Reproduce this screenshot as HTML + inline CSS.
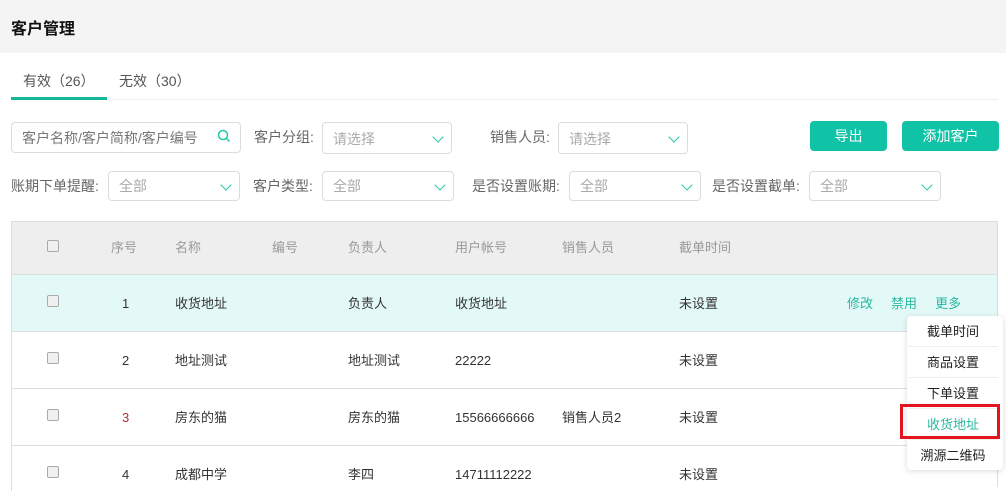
<!DOCTYPE html>
<html><head><meta charset="utf-8"><style>
*{box-sizing:border-box;margin:0;padding:0}
body{width:1006px;height:487px;overflow:hidden;background:#fff;font-family:"Liberation Sans","Noto Sans CJK SC",sans-serif;font-size:13px;color:#333;position:relative}
.a{position:absolute;white-space:nowrap;line-height:16px}
.hdr{left:0;top:0;width:1006px;height:53px;background:#f4f4f4}
.box{position:absolute;border:1px solid #dcdcdc;border-radius:4px;background:#fff;height:31px;color:#aaa;font-size:14px;padding:0 10px;line-height:30px}
.chev{position:absolute;right:9px;top:9px;width:8px;height:8px;border-right:1.6px solid #20c9a5;border-bottom:1.6px solid #20c9a5;transform:rotate(45deg)}
.lbl{font-size:14px;color:#666}
.btn{position:absolute;background:#11c3a6;color:#fff;border-radius:4px;height:30px;line-height:30px;text-align:center;font-size:14px}
.row{position:absolute;left:11px;width:987px;border-bottom:1px solid #ddd}
.cb{position:absolute;left:47px;width:12px;height:12px;border:1px solid #aaa;border-radius:2px;background:#f0f0f0}
.th{color:#999;font-size:13px}
.mi{position:absolute;left:908px;width:90px;height:31px;line-height:31px;text-align:center;color:#222;border-bottom:1px solid #eee}
</style></head><body>
<div class="a hdr"></div>
<div class="a" style="left:11px;top:22px;font-size:16px;font-weight:bold;color:#111">客户管理</div>
<div class="a" style="left:23px;top:73px;font-size:14px;color:#555">有效（26）</div>
<div class="a" style="left:119px;top:73px;font-size:14px;color:#555">无效（30）</div>
<div class="a" style="left:11px;top:99px;width:987px;height:1px;background:#eee"></div>
<div class="a" style="left:11px;top:97px;width:96px;height:3px;background:#14b896"></div>

<div class="box" style="left:11px;top:122px;width:230px;color:#777">客户名称/客户简称/客户编号</div>
<svg class="a" style="left:217px;top:129px" width="14" height="14" viewBox="0 0 14 14"><circle cx="6" cy="6" r="4.5" fill="none" stroke="#20c9a5" stroke-width="1.5"/><path d="M9.5 9.5L12.5 12.5" stroke="#20c9a5" stroke-width="1.5"/></svg>
<div class="a lbl" style="left:254px;top:129px">客户分组:</div>
<div class="box" style="left:322px;top:122px;width:130px;height:32px;line-height:32px">请选择<span class="chev" style="top:10px"></span></div>
<div class="a lbl" style="left:490px;top:129px">销售人员:</div>
<div class="box" style="left:558px;top:122px;width:130px;height:32px;line-height:32px">请选择<span class="chev" style="top:10px"></span></div>
<div class="btn" style="left:810px;top:121px;width:77px">导出</div>
<div class="btn" style="left:902px;top:121px;width:97px">添加客户</div>

<div class="a lbl" style="left:11px;top:178px">账期下单提醒:</div>
<div class="box" style="left:108px;top:171px;width:132px;height:30px;line-height:28px">全部<span class="chev"></span></div>
<div class="a lbl" style="left:253px;top:178px">客户类型:</div>
<div class="box" style="left:322px;top:171px;width:132px;height:30px;line-height:28px">全部<span class="chev"></span></div>
<div class="a lbl" style="left:472px;top:178px">是否设置账期:</div>
<div class="box" style="left:569px;top:171px;width:132px;height:30px;line-height:28px">全部<span class="chev"></span></div>
<div class="a lbl" style="left:712px;top:178px">是否设置截单:</div>
<div class="box" style="left:809px;top:171px;width:132px;height:30px;line-height:28px">全部<span class="chev"></span></div>

<div class="row" style="top:221px;height:54px;background:#eee;border-top:1px solid #ddd;border-left:1px solid #ddd"></div>
<div class="cb" style="top:240px"></div>
<div class="a th" style="left:111px;top:240px">序号</div>
<div class="a th" style="left:175px;top:240px">名称</div>
<div class="a th" style="left:272px;top:240px">编号</div>
<div class="a th" style="left:348px;top:240px">负责人</div>
<div class="a th" style="left:455px;top:240px">用户帐号</div>
<div class="a th" style="left:562px;top:240px">销售人员</div>
<div class="a th" style="left:679px;top:240px">截单时间</div>

<div class="row" style="top:275px;height:57px;background:#e3f9f7;border-left:1px solid #ddd"></div>
<div class="cb" style="top:295px"></div>
<div class="a" style="left:122px;top:296px">1</div>
<div class="a" style="left:175px;top:296px">收货地址</div>
<div class="a" style="left:348px;top:296px">负责人</div>
<div class="a" style="left:455px;top:296px">收货地址</div>
<div class="a" style="left:679px;top:296px">未设置</div>
<div class="a" style="left:847px;top:296px;color:#2ab8a0">修改</div>
<div class="a" style="left:891px;top:296px;color:#2ab8a0">禁用</div>
<div class="a" style="left:935px;top:296px;color:#2ab8a0">更多</div>

<div class="row" style="top:332px;height:57px;border-left:1px solid #ddd"></div>
<div class="cb" style="top:352px"></div>
<div class="a" style="left:122px;top:353px">2</div>
<div class="a" style="left:175px;top:353px">地址测试</div>
<div class="a" style="left:348px;top:353px">地址测试</div>
<div class="a" style="left:455px;top:353px">22222</div>
<div class="a" style="left:679px;top:353px">未设置</div>

<div class="row" style="top:389px;height:57px;border-left:1px solid #ddd"></div>
<div class="cb" style="top:409px"></div>
<div class="a" style="left:122px;top:410px;color:#a33">3</div>
<div class="a" style="left:175px;top:410px">房东的猫</div>
<div class="a" style="left:348px;top:410px">房东的猫</div>
<div class="a" style="left:455px;top:410px">15566666666</div>
<div class="a" style="left:562px;top:410px">销售人员2</div>
<div class="a" style="left:679px;top:410px">未设置</div>

<div class="row" style="top:446px;height:45px;border-left:1px solid #ddd;border-bottom:none"></div>
<div class="cb" style="top:466px"></div>
<div class="a" style="left:122px;top:467px">4</div>
<div class="a" style="left:175px;top:467px">成都中学</div>
<div class="a" style="left:348px;top:467px">李四</div>
<div class="a" style="left:455px;top:467px">14711112222</div>
<div class="a" style="left:679px;top:467px">未设置</div>
<div class="a" style="left:997px;top:221px;width:1px;height:266px;background:#ddd"></div>

<div class="a" style="left:907px;top:316px;width:96px;height:154px;background:#fff;border-radius:4px;box-shadow:0 1px 6px rgba(0,0,0,.15)"></div>
<div class="mi" style="top:316px">截单时间</div>
<div class="mi" style="top:347px">商品设置</div>
<div class="mi" style="top:378px">下单设置</div>
<div class="mi" style="top:409px;color:#2ab8a0">收货地址</div>
<div class="mi" style="top:440px;border:none">溯源二维码</div>
<div class="a" style="left:900px;top:404px;width:100px;height:35px;border:3px solid #e3141e"></div>
</body></html>
